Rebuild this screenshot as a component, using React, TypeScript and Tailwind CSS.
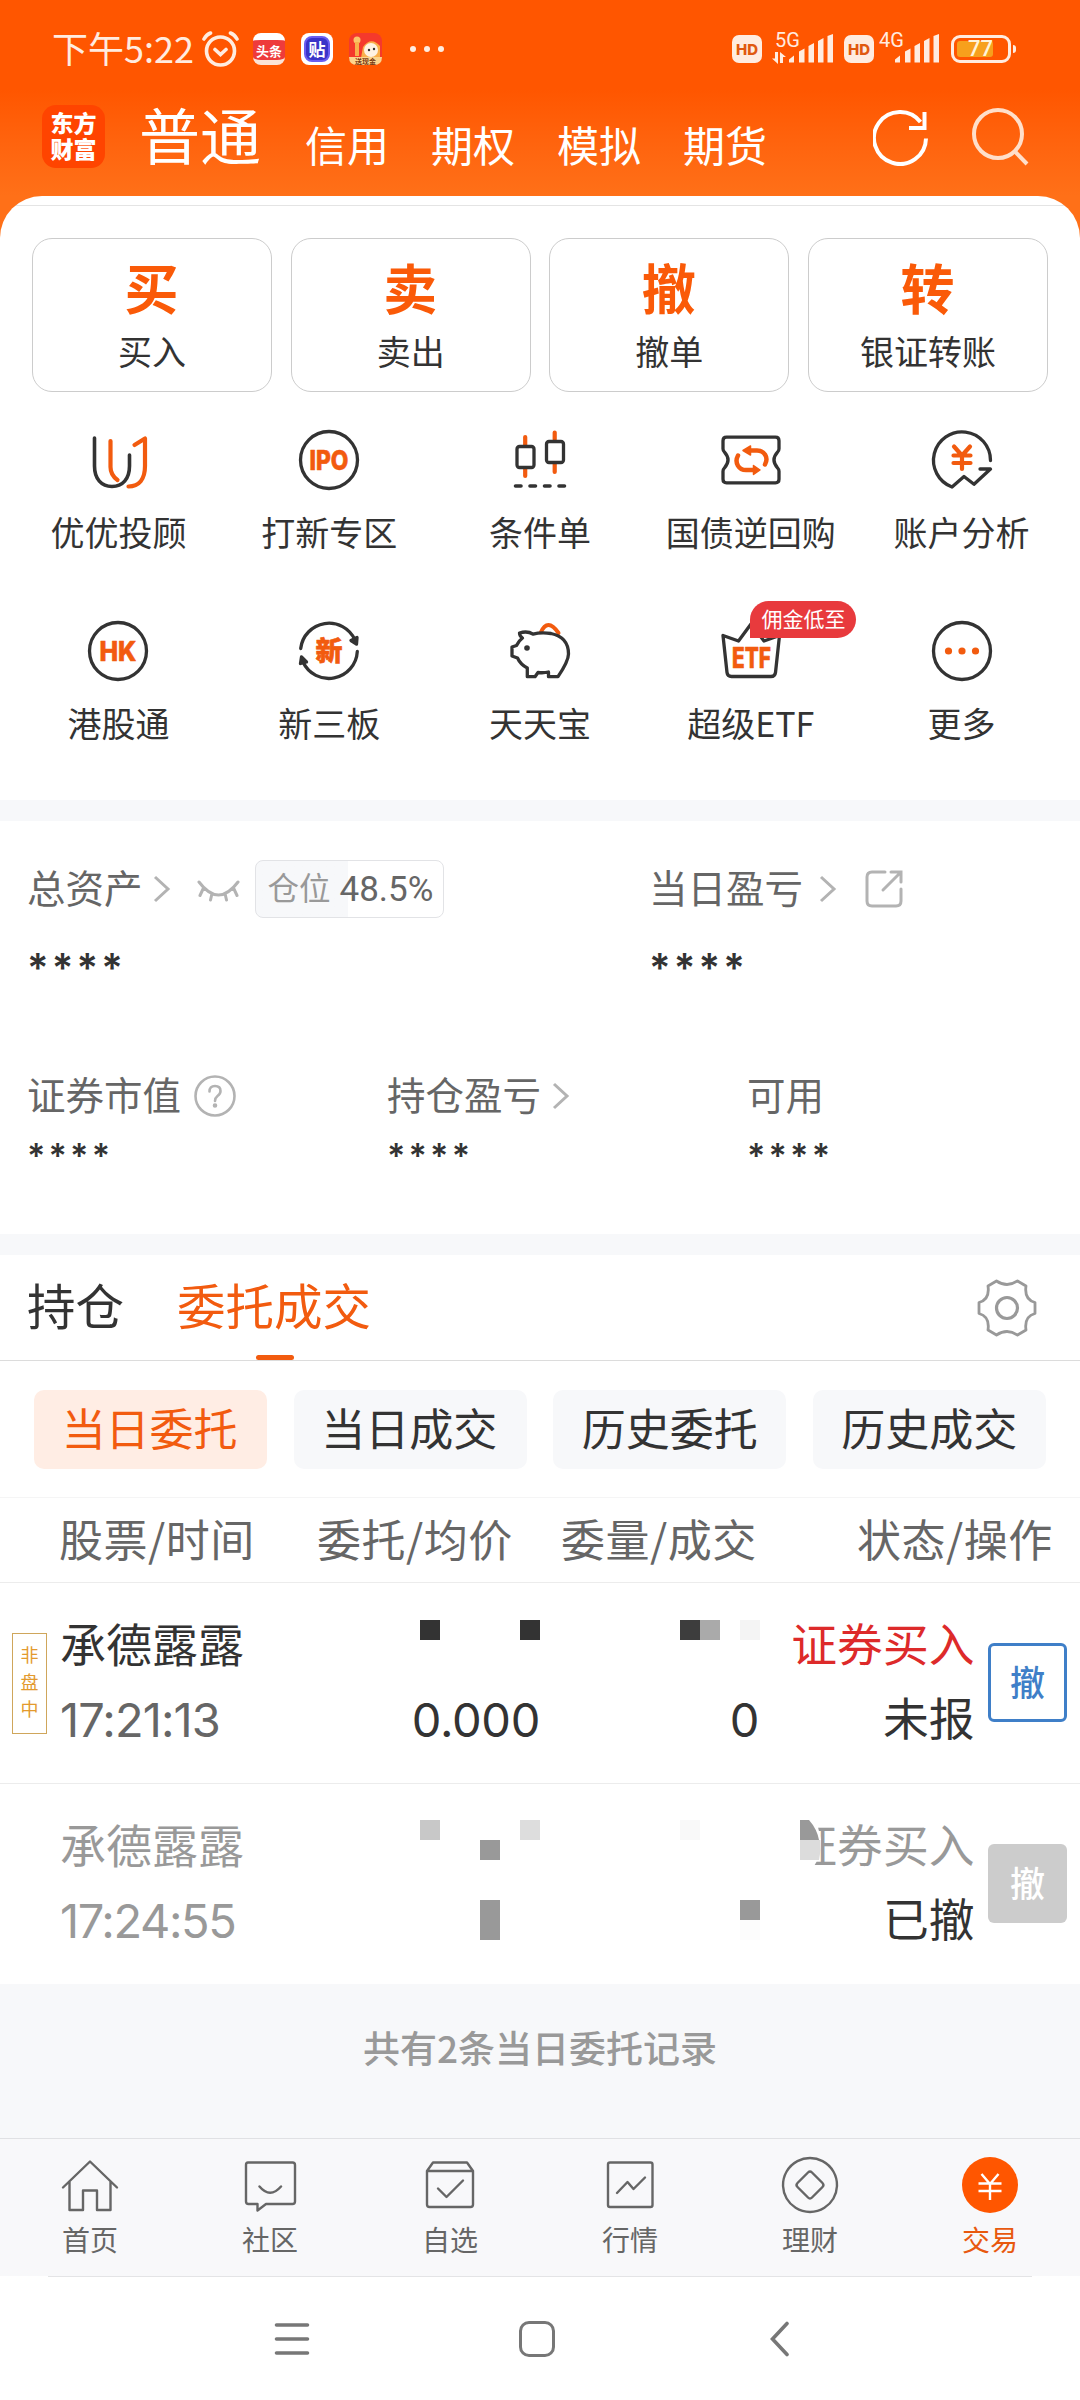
import React from "react";

const DARK = "#333333";
const ORANGE = "#f25b0f";

const TRADE_ACTIONS = [
  { mark: "买", label: "买入" },
  { mark: "卖", label: "卖出" },
  { mark: "撤", label: "撤单" },
  { mark: "转", label: "银证转账" },
];

function IconText({ text, width }: { text: string; width: number }) {
  return (
    <text
      x={30 - width / 2}
      y="40"
      textLength={width}
      lengthAdjust="spacingAndGlyphs"
      fontSize="27"
      fontWeight="800"
      fontFamily="Inter, sans-serif"
      fill={ORANGE}
      stroke={ORANGE}
      strokeWidth="0.6"
    >
      {text}
    </text>
  );
}

function Glyph({ children, size = 60, color = DARK, stroke = 3.3 }: any) {
  return (
    <svg
      width={size}
      height={size}
      viewBox="0 0 60 60"
      fill="none"
      stroke={color}
      strokeWidth={stroke}
      strokeLinecap="round"
      strokeLinejoin="round"
      className="block shrink-0 overflow-visible"
    >
      {children}
    </svg>
  );
}

const AdvisorIcon = () => (
  <Glyph stroke={3.6}>
    <path d="M6.5 8v28c0 13 7 20.500 17.500 20.500S41.500 49 41.500 36V25" />
    <path d="M22.500 11v26q0 8 7 13M46.500 15l10.500-6.500V36c0 13-6 20.500-16.500 20.500" stroke={ORANGE} strokeWidth="4.200" />
  </Glyph>
);

const IpoIcon = () => (
  <Glyph>
    <circle cx="30" cy="30" r="28.500" />
    <IconText text="IPO" width={39} />
  </Glyph>
);

const CandleIcon = () => (
  <Glyph>
    <path d="M15.200 7v8M15.200 39v7M44.700 2.500v7M44.700 34v8" stroke={ORANGE} strokeWidth="4.200" />
    <rect x="7" y="16.500" width="17" height="21" rx="2.500" />
    <rect x="36.500" y="11.500" width="17" height="21" rx="2.500" />
    <path d="M5.500 56h5.500M20 56h5.500M34.500 56h5.500M49 56h5.500" strokeWidth="3.600" />
  </Glyph>
);

const RepoIcon = () => (
  <Glyph>
    <path d="M5.500 7.200h49q3.500 0 3.500 3.500v8q0 2-1.500 3.500-7 7.800 0 15.600 1.500 1.500 1.500 3.500v8q0 3.500-3.500 3.500h-49Q2 52.800 2 49.300v-8q0-2 1.500-3.500 7-7.800 0-15.600Q2 20.700 2 18.700v-8Q2 7.200 5.500 7.200z" />
    <path d="M17 25.500C13 33 18 40 25 40h7M44 34.500C48 27 43 20.500 36 20.500h-6" stroke={ORANGE} strokeWidth="4.500" />
    <path d="M29.500 16v9L22 20.500zM32.500 35.500v9L39 40z" fill={ORANGE} stroke={ORANGE} strokeWidth="1.500" />
  </Glyph>
);

const AnalysisIcon = () => (
  <Glyph>
    <path d="M58.500 30.500A28.500 28.500 0 1 0 20 57l12-10.500 10 7.800L58.500 39H48" />
    <path d="M22 16.500l8 9 8-9M21.500 25.500h17M21.500 33h17M30 26v13" stroke={ORANGE} strokeWidth="4.200" />
  </Glyph>
);

const HkIcon = () => (
  <Glyph>
    <circle cx="30" cy="30" r="28.500" />
    <IconText text="HK" width={37} />
  </Glyph>
);

const NewBoardIcon = () => (
  <Glyph>
    <path d="M1.700 27.500A28.500 28.500 0 0 1 56 19M58.300 30.500A28.500 28.500 0 0 1 4 41" />
    <path d="M52 19.500l6-3-.5 6.500zM2.500 36l5 5-6 1.500z" fill={DARK} />
    <text
      x="30"
      y="40"
      textAnchor="middle"
      fontSize="27"
      fontWeight="800"
      fontFamily="Noto Sans CJK SC, sans-serif"
      fill={ORANGE}
      stroke={ORANGE}
      strokeWidth="0.6"
    >
      新
    </text>
  </Glyph>
);

const PiggyIcon = () => (
  <Glyph>
    <path d="M30.500 12q7-16 18 0" stroke={ORANGE} strokeWidth="4" />
    <path
      d="M9.500 12q8-2.500 13.500 1.200Q31 11 41 12.500 58.500 16 58.500 33q0 7-10.500 22.700h-9.500V51q-5 1.200-10.500.5l-3 4.200H17.300V47Q10.500 43.500 7.500 37L2 35v-9l4.500-1.500q2-4.500 6-7.500Q9.500 15 9.500 12z"
      fill="white"
    />
    <circle cx="17" cy="27" r="2.800" fill={DARK} stroke="none" />
  </Glyph>
);

const EtfIcon = () => (
  <Glyph>
    <path d="M2 14.500L17.500 20 30 3l13 17 15.500-5.500-4 37q-.5 4-4.500 4H10.500q-4 0-4.500-4z" />
    <text
      x="11"
      y="46.500"
      textLength="39"
      lengthAdjust="spacingAndGlyphs"
      fontSize="28"
      fontWeight="800"
      fontFamily="Inter, sans-serif"
      fill={ORANGE}
      stroke={ORANGE}
      strokeWidth="0.6"
    >
      ETF
    </text>
  </Glyph>
);

const MoreIcon = () => (
  <Glyph>
    <circle cx="30" cy="30" r="28.500" />
    <g fill={ORANGE} stroke="none">
      <circle cx="16.500" cy="30" r="3.600" />
      <circle cx="30" cy="30" r="3.600" />
      <circle cx="43.500" cy="30" r="3.600" />
    </g>
  </Glyph>
);

const SERVICES = [
  { label: "优优投顾", Icon: AdvisorIcon },
  { label: "打新专区", Icon: IpoIcon },
  { label: "条件单", Icon: CandleIcon },
  { label: "国债逆回购", Icon: RepoIcon },
  { label: "账户分析", Icon: AnalysisIcon },
  { label: "港股通", Icon: HkIcon },
  { label: "新三板", Icon: NewBoardIcon },
  { label: "天天宝", Icon: PiggyIcon },
  { label: "超级ETF", Icon: EtfIcon, badge: "佣金低至" },
  { label: "更多", Icon: MoreIcon },
];

function SignalBars() {
  return (
    <svg width="45" height="29" viewBox="0 0 45 29" fill="#ffece0" className="block">
      <path d="M0 28.500v-3l5-4v7zM10 17.500l5.500-3v14H10zM19.500 12l5.500-3v19.500h-5.500zM29 7l5.500-3v24.500H29zM38.500 2l5.500-2v28.500h-5.500z" />
    </svg>
  );
}

function HdBadge() {
  return (
    <div className="w-[30px] h-[28px] rounded-[7px] bg-[#ffece0] flex items-center justify-center font-['Inter'] text-[15px] font-extrabold leading-none text-[#e0590f]">
      HD
    </div>
  );
}

function StatusBar() {
  return (
    <div className="h-[98px] flex items-center pl-[52px] pr-[64px] text-[#ffece0]">
      <span className="w-[150px] text-[36px] leading-none whitespace-nowrap pb-[5px]">下午5:22</span>
      <svg width="37" height="36" viewBox="0 0 37 36" fill="none" stroke="currentColor" strokeWidth="3.600" strokeLinecap="round">
        <circle cx="18.500" cy="20" r="14" />
        <path d="M13 18.500l5.500 5 5.500-5M2 8q2.500-4.500 6.500-6M35 8q-2.500-4.500-6.500-6" />
      </svg>
      {/* 通知图标 */}
      <div className="ml-[14px] flex gap-4">
        <div className="w-8 h-8 rounded-[8px] bg-[#ee3b3b] border-t-[7px] border-t-white border-b-[5px] border-b-[#fbe3d6] flex items-center justify-center text-[13px] font-bold leading-none text-white">
          头条
        </div>
        <div className="w-8 h-8 rounded-[8px] bg-white p-[3px]">
          <div className="w-[26px] h-[26px] rounded-[8px] bg-[#3a34c8] border-2 border-[#6a5cf0] flex items-center justify-center text-[17px] font-bold leading-none text-white pb-px">
            贴
          </div>
        </div>
        <svg width="33" height="32" viewBox="0 0 33 32">
          <rect width="33" height="32" rx="8" fill="#f5392c" />
          <path d="M14 14q8-11 17-1v12H12z" fill="#f9b04c" />
          <circle cx="22" cy="17" r="7" fill="#fff3e4" />
          <circle cx="20" cy="17" r="1.200" fill="#333" />
          <circle cx="25" cy="16" r="1.200" fill="#333" />
          <circle cx="8" cy="7" r="3.500" fill="#fbc46a" />
          <path d="M8 9v14" stroke="#f9b04c" strokeWidth="4" />
          <path d="M0 24h33q0 8-8 8H8q-8 0-8-8z" fill="#fcd58e" />
          <text x="16.500" y="30.500" textAnchor="middle" fontSize="7" fontWeight="700" fill="#7a3a12" fontFamily="Noto Sans CJK SC, sans-serif">
            送现金
          </text>
        </svg>
      </div>
      <div className="ml-[28px] flex gap-2">
        <i className="w-1.5 h-1.5 rounded-full bg-current"></i>
        <i className="w-1.5 h-1.5 rounded-full bg-current"></i>
        <i className="w-1.5 h-1.5 rounded-full bg-current"></i>
      </div>

      <div className="ml-auto flex items-center">
        <HdBadge />
        <div className="relative ml-[10px] w-[62px] h-[30px] flex justify-end">
          <span className="absolute left-[3px] -top-[4px] text-[20px] leading-none font-['Roboto']">5G</span>
          <svg width="15" height="12" viewBox="0 0 15 12" fill="currentColor" className="absolute left-0 bottom-0">
            <path d="M3 0h3v12L0 6.500h3zM8 0l6 5h-3v6H8z" />
          </svg>
          <SignalBars />
        </div>
        <div className="ml-[10px]">
          <HdBadge />
        </div>
        <div className="relative ml-[4px] w-[62px] h-[30px] flex justify-end">
          <span className="absolute left-[1px] -top-[4px] text-[20px] leading-none font-['Roboto']">4G</span>
          <SignalBars />
        </div>
        <div className="ml-[11px] w-[60px] h-[28px] rounded-[9px] border-[3px] border-[#ffece0] p-[3px]">
          <div className="relative h-4 w-[36px] rounded-[3px] bg-[#f7a01c]">
            <span className="absolute left-[11px] -top-[3px] text-[22px] leading-none font-['Roboto'] font-medium text-[#fff3d8]">77</span>
          </div>
        </div>
        <i className="w-[3px] h-2 ml-[2px] rounded-r bg-current"></i>
      </div>
    </div>
  );
}

function AccountTabs() {
  return (
    <div className="flex items-start pl-[42px] text-white">
      <div className="mt-[7px] w-[63px] h-[63px] rounded-[14px] bg-[#ff4400] flex items-center justify-center text-center text-[23px] leading-[26px] font-black pb-[3px]">
        东方
        <br />
        财富
      </div>
      <span className="ml-[34px] mt-[5px] text-[61px] leading-none">普通</span>
      <div className="ml-[44px] mt-[25px] flex gap-[42px] text-[42px] leading-none">
        <span>信用</span>
        <span>期权</span>
        <span>模拟</span>
        <span>期货</span>
      </div>
      <svg width="56" height="56" viewBox="0 0 56 56" fill="none" stroke="white" strokeWidth="4" className="ml-[106px] mt-[12px]">
        <path d="M53 28.500A26 26 0 1 1 47.500 12" />
        <path d="M36 18h15.500V2" />
      </svg>
      <svg width="58" height="58" viewBox="0 0 58 58" fill="none" stroke="#ffdfca" strokeWidth="4" className="ml-[42px] mt-[10px]">
        <circle cx="27" cy="26" r="24" />
        <path d="M43.500 43L56 56" />
      </svg>
    </div>
  );
}

function Chevron() {
  return (
    <svg width="18" height="28" viewBox="0 0 18 28" fill="none" stroke="#b3b3b3" strokeWidth="3">
      <path d="M2 2l13 12L2 26" />
    </svg>
  );
}

function AssetPanel() {
  return (
    <div className="h-[413px] pt-[39px] pl-[27px] text-[#666]">
      <div className="flex">
        <div className="w-[622px]">
          <div className="h-[58px] flex items-center text-[38.500px] leading-none">
            <span className="pb-[6px]">总资产</span>
            <span className="ml-[10px]">
              <Chevron />
            </span>
            <svg width="43" height="22" viewBox="0 0 43 22" fill="none" stroke="#b3b3b3" strokeWidth="3" strokeLinecap="round" className="ml-[26px] mt-[4px]">
              <path d="M2 2q19.500 26 39 0M6.500 8L3 15.500M15 13.500L13.500 20M28 13.500L29.500 20M36.500 8l3.500 7.500" />
            </svg>
            <div className="ml-[15px] w-[189px] h-[58px] flex items-center rounded-[8px] border border-[#e2e3e6] bg-linear-to-r from-[#f7f8fa] from-[92px] to-white to-[92px]">
              <span className="ml-[12px] w-[72px] text-[31.500px] leading-none text-[#999] pb-[4px]">仓位</span>
              <span className="font-['Roboto'] text-[35px] leading-none">48.5%</span>
            </div>
          </div>
          <div className="mt-[30px] font-['Inter'] font-semibold text-[40px] leading-[40px] tracking-[3.200px] text-[#333]">****</div>
        </div>
        <div>
          <div className="h-[58px] flex items-center text-[38.500px] leading-none">
            <span className="pb-[6px]">当日盈亏</span>
            <span className="ml-[16px]">
              <Chevron />
            </span>
            <svg width="38" height="38" viewBox="0 0 38 38" fill="none" stroke="#b3b3b3" strokeWidth="3" strokeLinecap="round" className="ml-[28px]">
              <path d="M20 2H7Q2 2 2 7v24q0 5 5 5h24q5 0 5-5V19M26 2h10v10M35 3L18 20" />
            </svg>
          </div>
          <div className="mt-[30px] font-['Inter'] font-semibold text-[40px] leading-[40px] tracking-[3.200px] text-[#333]">****</div>
        </div>
      </div>
      <div className="mt-[87px] grid grid-cols-[360px_360px_1fr]">
        {["证券市值", "持仓盈亏", "可用"].map((label, i) => (
          <div key={label}>
            <div className="h-[42px] flex items-center text-[38.500px] leading-none">
              <span className="pb-[6px]">{label}</span>
              {i === 0 && (
                <svg width="42" height="42" viewBox="0 0 42 42" fill="none" stroke="#b3b3b3" strokeWidth="2.600" strokeLinecap="round" className="ml-[13px]">
                  <circle cx="21" cy="21" r="19.500" />
                  <path d="M15.500 16.500q0-5.500 5.500-5.500t5.500 5q0 3-3 5-2.500 2-2.500 5" />
                  <circle cx="21" cy="30.500" r="1" fill="#b3b3b3" />
                </svg>
              )}
              {i === 1 && (
                <span className="ml-[11px]">
                  <Chevron />
                </span>
              )}
            </div>
            <div className="mt-[22px] font-['Inter'] font-semibold text-[34px] leading-[34px] tracking-[3.200px] text-[#333]">****</div>
          </div>
        ))}
      </div>
    </div>
  );
}

function OrderTabs() {
  return (
    <div className="h-[106px] flex items-center border-b border-[#dcdcdc] pl-[27px] pr-[43px] text-[48.500px] leading-none text-[#333]">
      <span className="pb-[6px]">持仓</span>
      <div className="relative ml-[53px] pb-[6px] text-[#f25b0f]">
        委托成交
        <i className="absolute left-1/2 -ml-[18px] -bottom-[25px] w-[38px] h-[5px] rounded-full bg-[#f25b0f]"></i>
      </div>
      <svg width="60" height="60" viewBox="0 0 60 60" fill="none" stroke="#999" strokeWidth="2.800" strokeLinejoin="round" className="ml-auto">
        <path d="M19.500 3Q30 10 40.500 3L49 8Q47 21.500 58 24.500v11Q47 38.500 49 52l-8.500 5Q30 50 19.500 57L11 52Q13 38.500 2 35.500v-11Q13 21.500 11 8z" />
        <circle cx="30" cy="30" r="10.500" strokeWidth="3.200" />
      </svg>
    </div>
  );
}

function Mosaic({ x, y, color, h = 20 }: { x: number; y: number; color: string; h?: number }) {
  return <i className="absolute w-[20px]" style={{ left: x, top: y, height: h, background: color }}></i>;
}

function OrderRow({ time, status, cancelled, price, amount, children }: any) {
  return (
    <div className={"relative flex pl-[12px] pr-[13px] " + (cancelled ? "h-[200px] text-[#999]" : "h-[201px] text-[#333] border-b border-[#ececec]")}>
      <div className="w-[48px]">
        {!cancelled && (
          <div className="mt-[50px] w-[35px] h-[101px] border border-[#cfa65b] flex flex-col items-center pt-[7px] text-[18px] leading-[27px] text-[#e39a2e]">
            <span>非</span>
            <span>盘</span>
            <span>中</span>
          </div>
        )}
      </div>
      <div className="w-[260px] pt-[36px]">
        <div className="text-[46px] leading-[46px]">承德露露</div>
        <div className={"mt-[31px] font-['Inter'] text-[47px] leading-[48px] " + (cancelled ? "tracking-[-1.400px] text-[#999]" : "tracking-[-0.900px] text-[#666]")}>{time}</div>
      </div>
      <div className="w-[220px] pt-[113px] text-right font-['Inter'] text-[47px] leading-[48px] tracking-[-0.300px]">{price}</div>
      <div className="w-[219px] pt-[113px] text-right font-['Inter'] text-[47px] leading-[48px] tracking-[-0.300px]">{amount}</div>
      <div className="w-[215.500px] pt-[36px] text-right text-[45.800px] leading-[46px]">
        <div className={cancelled ? "" : "text-[#dd2a2a]"}>证券买入</div>
        <div className="mt-[28px] text-[#333]">{status}</div>
      </div>
      <div
        className={
          "ml-auto mt-[60px] w-[79px] h-[79px] rounded-[6px] flex items-center justify-center pb-[4px] text-[35px] leading-none font-medium " +
          (cancelled ? "bg-[#cccccc] text-white" : "border-[3px] border-[#3f7fc8] text-[#3f7fc8]")
        }
      >
        撤
      </div>
      {children}
    </div>
  );
}

const YEN = "M21.500 19l8.500 10 8.500-10M18.500 28.500h23M18.500 36h23M30 29v16";

const NAV_ITEMS = [
  {
    label: "首页",
    icon: <path d="M3 32.500L30 6.500l27 26M9.500 27v28H23V35.500h14V55h13.500V27" />,
  },
  {
    label: "社区",
    icon: <path d="M8 7.500h44.500q2.500 0 2.500 2.500v36.500q0 2.500-2.500 2.500H26l-8.500 6.500V49H8.500Q6 49 6 46.500V10q0-2.500 2-2.500zM19.500 31.500q10.500 12.500 21.500 0" />,
  },
  {
    label: "自选",
    icon: <path d="M7 16l6-8.500h34l6 8.500v33.500q0 2.500-2.500 2.500h-41Q7 52 7 49.500zM7 16h46M18 33.500l8.500 8.500L43 25.500" />,
  },
  {
    label: "行情",
    icon: <path d="M10 7.500h40.500q2 0 2 2v40.500q0 2-2 2H10q-2 0-2-2V9.500q0-2 2-2zM17 38l10.500-11 6 7L45 22.500" />,
  },
  {
    label: "理财",
    icon: <path d="M30 3a27 27 0 1 0 .01 0zM28 17.500L17.500 28q-2 2 0 4L28 42.500q2 2 4 0L42.500 32q2-2 0-4L32 17.500q-2-2-4 0z" />,
  },
  {
    label: "交易",
    active: true,
    icon: (
      <>
        <circle cx="30" cy="30" r="28" fill="#ff5600" stroke="none" />
        <path d={YEN} stroke="white" strokeLinecap="butt" />
      </>
    ),
  },
];

export default function App() {
  return (
    <div className="w-[1080px] h-[2400px] overflow-hidden bg-white font-['Noto_Sans_CJK_SC',sans-serif]">
      <div className="h-[244px] bg-linear-to-b from-[#ff5600] from-[90px] to-[#ff7018] to-[196px]">
        <StatusBar />
        <AccountTabs />
      </div>

      {/* 交易入口 */}
      <div className="relative -mt-[48px] h-[604px] rounded-t-[42px] bg-white pt-[9px]">
        <div className="mx-[16px] h-px bg-[#e4e4e4]"></div>
        <div className="mt-[32px] px-[32px] grid grid-cols-4 gap-x-[18.500px]">
          {TRADE_ACTIONS.map((item) => (
            <div key={item.label} className="h-[154px] rounded-[20px] border border-[#cccccc] flex flex-col items-center pt-[21px]">
              <span className="pr-px text-[54px] leading-none font-bold text-[#fa5a08]">{item.mark}</span>
              <span className="mt-[20px] text-[34px] leading-none text-[#333]">{item.label}</span>
            </div>
          ))}
        </div>
        <div className="mt-[38px] pl-[13px] pr-[13px] grid grid-cols-5 gap-y-[72px]">
          {SERVICES.map(({ label, Icon, badge }) => (
            <div key={label} className="relative flex flex-col items-center">
              <Icon />
              <span className="mt-[25px] text-[34px] leading-none text-[#333] whitespace-nowrap">{label}</span>
              {badge && (
                <span className="absolute left-[105px] -top-[20px] w-[106px] h-[37px] rounded-full rounded-bl-none bg-[#e83a3d] text-white text-[21px] leading-[34px] text-center">
                  {badge}
                </span>
              )}
            </div>
          ))}
        </div>
      </div>

      <div className="h-[21px] bg-[#f7f8fa]"></div>
      <AssetPanel />
      <div className="h-[21px] bg-[#f7f8fa]"></div>
      <OrderTabs />

      <div className="h-[137px] border-b border-[#f5f5f5] pt-[29px] px-[34px] grid grid-cols-4 gap-x-[26.300px] text-[44px] leading-none text-[#333]">
        <div className="h-[79px] rounded-[10px] bg-[#ffede4] text-[#f25b0f] flex items-center justify-center pb-[6px] pr-[2px]">当日委托</div>
        <div className="h-[79px] rounded-[10px] bg-[#f7f8fa] flex items-center justify-center pb-[6px] pr-[2px]">当日成交</div>
        <div className="h-[79px] rounded-[10px] bg-[#f7f8fa] flex items-center justify-center pb-[6px]">历史委托</div>
        <div className="h-[79px] rounded-[10px] bg-[#f7f8fa] flex items-center justify-center pb-[6px]">历史成交</div>
      </div>

      <div className="h-[85px] border-b border-[#ececec] flex items-center pl-[59px] pb-[5px] text-[44px] leading-none tracking-[0.500px] text-[#666]">
        <span className="w-[258px]">股票/时间</span>
        <span className="w-[244px]">委托/均价</span>
        <span className="w-[296px]">委量/成交</span>
        <span>状态/操作</span>
      </div>

      <OrderRow time="17:21:13" status="未报" price="0.000" amount="0">
        <Mosaic x={420} y={37} color="#333333" />
        <Mosaic x={520} y={37} color="#333333" />
        <Mosaic x={680} y={37} color="#3d3d3d" />
        <Mosaic x={700} y={37} color="#aaaaaa" />
        <Mosaic x={740} y={37} color="#f4f4f4" />
      </OrderRow>
      <OrderRow time="17:24:55" status="已撤" cancelled>
        <Mosaic x={420} y={36} color="#c8c8c8" />
        <Mosaic x={520} y={36} color="#dddddd" />
        <Mosaic x={680} y={36} color="#f9f9f9" />
        <Mosaic x={480} y={56} color="#999999" />
        <Mosaic x={480} y={116} color="#999999" h={40} />
        <Mosaic x={740} y={116} color="#999999" />
        <Mosaic x={740} y={136} color="#fcfcfc" />
        <svg width="40" height="60" viewBox="0 0 40 60" className="absolute left-[785px] top-[30px]">
          <path d="M0 0H23L33 13L36 26Q36 42 28 54H0z" fill="white" />
          <path d="M15 6H24Q32 15 34 26H15z" fill="#999" />
          <path d="M15 26H35.500Q36.500 36 34 46H15z" fill="#dcdcdc" />
        </svg>
      </OrderRow>

      <div className="h-[154px] bg-[#f7f8fa] flex justify-center pt-[45px] text-[37px] leading-none font-medium text-[#999]">
        共有2条当日委托记录
      </div>

      {/* 底部导航 */}
      <div className="h-[138px] border-t border-[#e0e1e4] bg-[#f8f8fa] grid grid-cols-6 pt-[16px]">
        {NAV_ITEMS.map((item) => (
          <div key={item.label} className={"flex flex-col items-center " + (item.active ? "text-[#e8590f]" : "text-[#666]")}>
            <Glyph color="currentColor" stroke={2.4}>
              {item.icon}
            </Glyph>
            <span className="mt-[10px] text-[28px] leading-none">{item.label}</span>
          </div>
        ))}
      </div>
      <div className="mx-[48px] h-px bg-[#e4e4e6]"></div>

      <div className="h-[123px] flex items-center text-[#777]">
        <svg width="36" height="34" viewBox="0 0 36 34" stroke="currentColor" strokeWidth="3.600" strokeLinecap="round" className="ml-[274px]">
          <path d="M2.500 3h31M2.500 17h31M2.500 31h31" />
        </svg>
        <div className="ml-[209px] w-[36px] h-[36px] rounded-[10px] border-[3.500px] border-current"></div>
        <svg width="20" height="36" viewBox="0 0 20 36" fill="none" stroke="currentColor" strokeWidth="3.600" strokeLinecap="round" className="ml-[215px]">
          <path d="M17 2.500L2.500 18 17 33.500" />
        </svg>
      </div>
    </div>
  );
}
